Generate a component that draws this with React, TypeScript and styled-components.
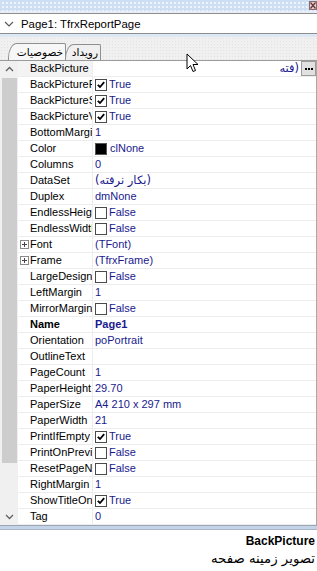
import React from 'react'
import styled, { createGlobalStyle } from 'styled-components'

const GlobalStyle = createGlobalStyle`
    html, body {
        margin: 0;
        padding: 0;
        background: #ffffff;
    }
    body {
        font-family: "Liberation Sans", "DejaVu Sans", Arial, sans-serif;
        font-size: 11px;
        color: #000;
    }
`

const FONT = `"Liberation Sans", "DejaVu Sans", Arial, sans-serif`
const ARABIC = `"DejaVu Sans", "Liberation Sans", sans-serif`
const VALUE_COLOR = '#1a1a8e'
const LINE = '#ededed'

const Window = styled.div`
    position: relative;
    width: 317px;
    height: 571px;
    display: flex;
    flex-direction: column;
    overflow: hidden;
    font-family: ${FONT};
`

const TitleBar = styled.div`
    height: 11px;
    display: flex;
    justify-content: flex-end;
    background-color: #cfdff3;
    background-image: radial-gradient(#eef4fc 0.9px, transparent 1.1px);
    background-size: 4px 4px;
    background-position: 1px 1px;
    border-bottom: 2px solid #e7eef8;
`

const CloseBox = styled.div`
    width: 8px;
    height: 10px;
    display: flex;
    align-items: center;
    justify-content: center;
`

const ComboRow = styled.div`
    height: 19px;
    display: flex;
    align-items: center;
    border-top: 1px solid #8d8d8d;
    border-bottom: 1px solid #8d8d8d;
    background: #fff;
    font-size: 11.4px;
    gap: 7px;
    padding-left: 4px;
`

const TabStrip = styled.div`
    height: 27px;
    display: flex;
    align-items: flex-end;
    padding-left: 8px;
    border-top: 3px solid #dde8f5;
    border-bottom: 1px solid #9a9a9a;
    background-color: #f0f0f0;
    background-image: radial-gradient(#e2e2e2 0.6px, transparent 0.8px);
    background-size: 3px 3px;
    box-sizing: border-box;
`

const Tab = styled.div<{ $active?: boolean; $width: number }>`
    width: ${({ $width }) => $width}px;
    height: ${({ $active }) => ($active ? 17 : 16)}px;
    display: flex;
    align-items: center;
    justify-content: flex-end;
    padding: 0 2px 0 0;
    border: 1px solid #8f8f8f;
    border-bottom: none;
    border-radius: 9px 2px 0 0 / 15px 2px 0 0;
    background: ${({ $active }) => ($active ? '#f7f7f7' : '#f0f0f0')};
    margin-right: -1px;
    box-sizing: border-box;
    overflow: hidden;
    flex: none;
`

const TabLabel = styled.span`
    direction: rtl;
    unicode-bidi: isolate;
    font-family: ${ARABIC};
    font-size: 10.5px;
    line-height: 15px;
    white-space: nowrap;
`

const GridArea = styled.div`
    height: 464px;
    display: flex;
    border-right: 1px solid #a9a9a9;
`

const ScrollBar = styled.div`
    width: 18px;
    display: flex;
    flex-direction: column;
    background: #f0f0f0;
`

const ScrollArrow = styled.div`
    height: 16px;
    display: flex;
    align-items: center;
    justify-content: center;
`

const ScrollTrack = styled.div`
    flex: 1;
    padding: 1px 1px 0 2px;
`

const Thumb = styled.div`
    height: 385px;
    background: #cdcdcd;
`

const Rows = styled.div`
    flex: 1;
    display: flex;
    flex-direction: column;
`

const Row = styled.div`
    height: 16px;
    display: grid;
    grid-template-columns: 75px 1fr;
    border-bottom: 1px solid ${LINE};
    box-sizing: border-box;
    font-size: 11px;
    line-height: 15px;
`

const NameCell = styled.div<{ $bold?: boolean; $selected?: boolean }>`
    display: flex;
    align-items: center;
    padding-left: 2px;
    border-right: 1px solid ${LINE};
    overflow: hidden;
    white-space: nowrap;
    font-weight: ${({ $bold }) => ($bold ? 700 : 400)};
    background: ${({ $selected }) => ($selected ? '#f3f3f3' : '#fff')};
`

const ExpandSlot = styled.div`
    width: 10px;
    flex: none;
    display: flex;
    align-items: center;
`

const PlusBox = styled.div`
    width: 7px;
    height: 7px;
    border: 1px solid #8a8a8a;
    position: relative;
    background: #fff;
    &::before, &::after {
        content: '';
        position: absolute;
        background: #444;
    }
    &::before { left: 1px; right: 1px; top: 3px; height: 1px; }
    &::after { top: 1px; bottom: 1px; left: 3px; width: 1px; }
`

const ValueCell = styled.div<{ $bold?: boolean }>`
    display: flex;
    align-items: center;
    padding-left: 2px;
    gap: 2px;
    overflow: hidden;
    white-space: nowrap;
    color: ${VALUE_COLOR};
    font-weight: ${({ $bold }) => ($bold ? 700 : 400)};
`

const CheckBox = styled.div`
    width: 10px;
    height: 10px;
    border: 1px solid #4a4a4a;
    background: #fff;
    display: flex;
    align-items: center;
    justify-content: center;
    flex: none;
`

const ColorSwatch = styled.div`
    width: 10px;
    height: 10px;
    background: #000;
    border: 1px solid #555;
    flex: none;
    margin-right: 1px;
`

const Spacer = styled.div`
    flex: 1;
`

const EllipsisButton = styled.div`
    width: 13px;
    height: 13px;
    border: 1px solid #9c9c9c;
    background: #e1e1e1;
    display: flex;
    align-items: center;
    justify-content: center;
    gap: 1px;
`

const Dot = styled.span`
    width: 2px;
    height: 2px;
    background: #000;
`

const RtlText = styled.span`
    direction: rtl;
    unicode-bidi: isolate;
    font-family: ${ARABIC};
    font-size: 11.5px;
    line-height: 15px;
`

const Splitter = styled.div`
    height: 5px;
    background: #c5d3e6;
    border-top: 1px solid #9aa7b8;
    border-bottom: 1px solid #a8b6c8;
    box-sizing: border-box;
`

const Description = styled.div`
    flex: 1;
    display: flex;
    flex-direction: column;
    align-items: flex-end;
    padding: 4px 2px 0 0;
    gap: 3px;
    background: #fff;
`

const DescTitle = styled.div`
    font-weight: 700;
    font-size: 12px;
`

const DescText = styled.div`
    direction: rtl;
    font-family: ${ARABIC};
    font-size: 13.3px;
    line-height: 15px;
`

const Cursor = styled.svg`
    position: absolute;
    left: 186px;
    top: 53px;
`

type Prop = {
    name: string
    kind: 'text' | 'check' | 'color' | 'picture' | 'rtl'
    value?: string
    checked?: boolean
    bold?: boolean
    expand?: boolean
}

const props: Prop[] = [
    { name: 'BackPicture', kind: 'picture' },
    { name: 'BackPicturePrintable', kind: 'check', checked: true },
    { name: 'BackPictureStretched', kind: 'check', checked: true },
    { name: 'BackPictureVisible', kind: 'check', checked: true },
    { name: 'BottomMargin', kind: 'text', value: '1' },
    { name: 'Color', kind: 'color', value: 'clNone' },
    { name: 'Columns', kind: 'text', value: '0' },
    { name: 'DataSet', kind: 'rtl', value: '(بكار نرفته)' },
    { name: 'Duplex', kind: 'text', value: 'dmNone' },
    { name: 'EndlessHeight', kind: 'check', checked: false },
    { name: 'EndlessWidth', kind: 'check', checked: false },
    { name: 'Font', kind: 'text', value: '(TFont)', expand: true },
    { name: 'Frame', kind: 'text', value: '(TfrxFrame)', expand: true },
    { name: 'LargeDesignHeight', kind: 'check', checked: false },
    { name: 'LeftMargin', kind: 'text', value: '1' },
    { name: 'MirrorMargins', kind: 'check', checked: false },
    { name: 'Name', kind: 'text', value: 'Page1', bold: true },
    { name: 'Orientation', kind: 'text', value: 'poPortrait' },
    { name: 'OutlineText', kind: 'text', value: '' },
    { name: 'PageCount', kind: 'text', value: '1' },
    { name: 'PaperHeight', kind: 'text', value: '29.70' },
    { name: 'PaperSize', kind: 'text', value: 'A4 210 x 297 mm' },
    { name: 'PaperWidth', kind: 'text', value: '21' },
    { name: 'PrintIfEmpty', kind: 'check', checked: true },
    { name: 'PrintOnPreviousPage', kind: 'check', checked: false },
    { name: 'ResetPageNumbers', kind: 'check', checked: false },
    { name: 'RightMargin', kind: 'text', value: '1' },
    { name: 'ShowTitleOnPreviousPage', kind: 'check', checked: true },
    { name: 'Tag', kind: 'text', value: '0' },
]

const Check = ({ checked }: { checked?: boolean }) => (
    <CheckBox>
        {checked && (
            <svg width="8" height="8" viewBox="0 0 8 8">
                <path d="M0.8 3.8 L3 6 L7.2 1.2" stroke="#000" strokeWidth="1.8" fill="none" />
            </svg>
        )}
    </CheckBox>
)

const Value = ({ p }: { p: Prop }) => {
    switch (p.kind) {
        case 'check':
            return (
                <ValueCell>
                    <Check checked={p.checked} />
                    {p.checked ? 'True' : 'False'}
                </ValueCell>
            )
        case 'color':
            return (
                <ValueCell>
                    <ColorSwatch />
                    {p.value}
                </ValueCell>
            )
        case 'rtl':
            return (
                <ValueCell>
                    <RtlText>{p.value}</RtlText>
                </ValueCell>
            )
        case 'picture':
            return (
                <ValueCell>
                    <Spacer />
                    <RtlText>(فته</RtlText>
                    <EllipsisButton>
                        <Dot />
                        <Dot />
                        <Dot />
                    </EllipsisButton>
                </ValueCell>
            )
        default:
            return <ValueCell $bold={p.bold}>{p.value}</ValueCell>
    }
}

const Chevron = ({ up }: { up?: boolean }) => (
    <svg width="9" height="6" viewBox="0 0 9 6">
        <path d={up ? 'M1 5 L4.5 1.5 L8 5' : 'M1 1 L4.5 4.5 L8 1'} stroke="#606060" strokeWidth="1.3" fill="none" />
    </svg>
)

const App = () => {
    return (
        <>
            <GlobalStyle />
            <Window>
                <TitleBar>
                    <CloseBox>
                        <svg width="8" height="9" viewBox="0 0 8 9">
                            <rect x="0.5" y="0.5" width="7" height="8" fill="#e9c9c9" stroke="#8a6a6a" />
                            <path d="M1.5 1.5 L6.5 7.5 M6.5 1.5 L1.5 7.5" stroke="#5a3a3a" strokeWidth="1.2" />
                        </svg>
                    </CloseBox>
                </TitleBar>
                <ComboRow>
                    <svg width="10" height="6" viewBox="0 0 10 6">
                        <path d="M1 1 L5 5 L9 1" stroke="#555" strokeWidth="1.1" fill="none" />
                    </svg>
                    <span>Page1: TfrxReportPage</span>
                </ComboRow>
                <TabStrip>
                    <Tab $active $width={58}>
                        <TabLabel>خصوصيات</TabLabel>
                    </Tab>
                    <Tab $width={36}>
                        <TabLabel>رويداد</TabLabel>
                    </Tab>
                </TabStrip>
                <GridArea>
                    <ScrollBar>
                        <ScrollArrow>
                            <Chevron up />
                        </ScrollArrow>
                        <ScrollTrack>
                            <Thumb />
                        </ScrollTrack>
                        <ScrollArrow>
                            <Chevron />
                        </ScrollArrow>
                    </ScrollBar>
                    <Rows>
                        {props.map((p, i) => (
                            <Row key={p.name}>
                                <NameCell $bold={p.bold} $selected={i === 0}>
                                    <ExpandSlot>{p.expand && <PlusBox />}</ExpandSlot>
                                    {p.name}
                                </NameCell>
                                <Value p={p} />
                            </Row>
                        ))}
                    </Rows>
                </GridArea>
                <Splitter />
                <Description>
                    <DescTitle>BackPicture</DescTitle>
                    <DescText>تصوير زمينه صفحه</DescText>
                </Description>
                <Cursor width="13" height="21" viewBox="0 0 13 21">
                    <path d="M1 1 L1 16 L4.5 12.5 L7 18.5 L9.5 17.5 L7 11.5 L12 11.5 Z" fill="#fff" stroke="#000" strokeWidth="1" strokeLinejoin="round" />
                </Cursor>
            </Window>
        </>
    )
}

export default App
